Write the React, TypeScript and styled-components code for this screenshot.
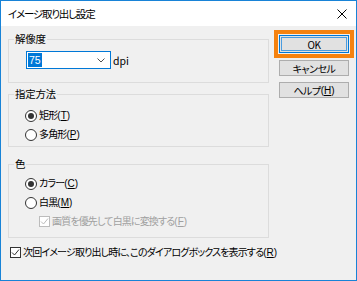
import styled, { createGlobalStyle } from 'styled-components';

const GlobalStyle = createGlobalStyle`
    html, body {
        margin: 0;
        padding: 0;
        background: #ffffff;
    }
    body {
        font-family: "Noto Sans CJK JP", "Noto Sans", sans-serif;
        font-size: 10px;
        letter-spacing: -0.85px;
        color: #000000;
        font-feature-settings: "palt";
    }
`;

const Window = styled.div`
    width: 357px;
    height: 281px;
    box-sizing: border-box;
    border: 1px solid #1883d7;
    background: #f0f0f0;
    display: flex;
    flex-direction: column;
`;

const TitleBar = styled.div`
    height: 25px;
    background: #ffffff;
    display: flex;
    align-items: center;
    justify-content: space-between;
    padding-left: 7px;
`;

const Title = styled.div`
    font-size: 10.5px;
    letter-spacing: -1.2px;
    line-height: 14px;
`;

const CloseButton = styled.div`
    width: 28px;
    height: 25px;
    display: flex;
    align-items: center;
    justify-content: center;
`;

const Body = styled.div`
    flex: 1;
    display: flex;
    align-items: flex-start;
    padding: 6px 0 0 7px;
    gap: 5px;
`;

const LeftColumn = styled.div`
    width: 261px;
    display: flex;
    flex-direction: column;
`;

const RightColumn = styled.div`
    display: flex;
    flex-direction: column;
    margin-top: -2px;
`;

const GroupBox = styled.fieldset<{ $gap?: number }>`
    margin: ${({ $gap }) => $gap ?? 0}px 0 0 0;
    padding: 0;
    border: 1px solid #dcdcdc;
    min-width: 0;
`;

const GroupLabel = styled.legend`
    margin-left: 5px;
    padding: 0 1px;
    line-height: 14px;
    font-size: 10.5px;
    letter-spacing: -0.3px;
`;

const GroupContent = styled.div<{ $pt: number; $pb: number }>`
    display: flex;
    flex-direction: column;
    padding: ${({ $pt, $pb }) => `${$pt}px 0 ${$pb}px 16px`};
`;

const ComboRow = styled.div`
    display: flex;
    align-items: center;
    padding-left: 1px;
`;

const Combo = styled.div`
    width: 85px;
    height: 18px;
    box-sizing: border-box;
    border: 1px solid #0078d7;
    background: #ffffff;
    display: flex;
    align-items: center;
    padding: 0 1px;
`;

const Selected = styled.span`
    background: #0078d7;
    color: #ffffff;
    line-height: 14px;
    padding: 0 1px;
    font-family: "Liberation Sans", Arial, sans-serif;
    font-size: 10.5px;
    letter-spacing: 0;
`;

const Chevron = styled.svg`
    margin-left: auto;
    margin-right: 4px;
`;

const Unit = styled.span`
    margin-left: 2px;
    font-size: 10.5px;
    letter-spacing: 0;
`;

const Option = styled.label<{ $indent?: number; $disabled?: boolean }>`
    display: flex;
    align-items: center;
    height: 19px;
    gap: 2px;
    margin-left: ${({ $indent }) => $indent ?? 0}px;
    color: ${({ $disabled }) => ($disabled ? '#a0a0a0' : '#000000')};
    white-space: nowrap;
`;

const OptionText = styled.span`
    line-height: 14px;
`;

const Radio = styled.span<{ $checked?: boolean }>`
    width: 12px;
    height: 12px;
    box-sizing: border-box;
    border: 1px solid #333333;
    border-radius: 50%;
    background: #ffffff;
    display: flex;
    align-items: center;
    justify-content: center;
    flex-shrink: 0;

    &::after {
        content: '';
        width: 6px;
        height: 6px;
        border-radius: 50%;
        background: ${({ $checked }) => ($checked ? '#333333' : 'transparent')};
    }
`;

const CheckBox = styled.span<{ $disabled?: boolean }>`
    width: 11px;
    height: 11px;
    box-sizing: border-box;
    border: 1px solid ${({ $disabled }) => ($disabled ? '#bcbcbc' : '#333333')};
    background: #ffffff;
    display: flex;
    align-items: center;
    justify-content: center;
    flex-shrink: 0;
`;

const BottomRow = styled.div`
    margin-top: 5px;
    padding-left: 2px;
`;

const Highlight = styled.div`
    border: 4px solid #f5820f;
    padding: 1px;
`;

const Button = styled.div<{ $focused?: boolean; $gap?: number }>`
    width: 70px;
    height: ${({ $focused }) => ($focused ? 18 : 16)}px;
    box-sizing: border-box;
    margin-top: ${({ $gap }) => $gap ?? 0}px;
    margin-left: ${({ $focused }) => ($focused ? 0 : 5)}px;
    border: 1px solid ${({ $focused }) => ($focused ? '#0078d7' : '#adadad')};
    box-shadow: ${({ $focused }) => ($focused ? 'inset 0 0 0 1px #e1e1e1, inset 0 0 0 2px #4a9ce0' : 'none')};
    background: #e1e1e1;
    display: flex;
    align-items: center;
    justify-content: center;
    letter-spacing: -0.5px;
`;

const Mnemonic = styled.span`
    font-family: "Liberation Sans", Arial, sans-serif;
    letter-spacing: 0;

    u {
        text-underline-offset: 1px;
    }
`;

function Key({ k }: { k: string }) {
    return (
        <Mnemonic>
            (<u>{k}</u>)
        </Mnemonic>
    );
}

function Check({ color }: { color: string }) {
    return (
        <svg width="9" height="9" viewBox="0 0 9 9">
            <path d="M1 4.5 L3.5 7 L8 1.5" fill="none" stroke={color} strokeWidth="1" />
        </svg>
    );
}

export default function App() {
    return (
        <>
            <GlobalStyle />
            <Window>
                <TitleBar>
                    <Title>イメージ取り出し設定</Title>
                    <CloseButton>
                        <svg width="10" height="10" viewBox="0 0 10 10">
                            <path d="M0.5 0.5 L9.5 9.5 M9.5 0.5 L0.5 9.5" stroke="#000" strokeWidth="1" />
                        </svg>
                    </CloseButton>
                </TitleBar>
                <Body>
                    <LeftColumn>
                        <GroupBox>
                            <GroupLabel>解像度</GroupLabel>
                            <GroupContent $pt={5} $pb={13}>
                                <ComboRow>
                                    <Combo>
                                        <Selected>75</Selected>
                                        <Chevron width="8" height="5" viewBox="0 0 8 5">
                                            <path d="M0.5 0.5 L4 4 L7.5 0.5" fill="none" stroke="#505050" strokeWidth="1" />
                                        </Chevron>
                                    </Combo>
                                    <Unit>dpi</Unit>
                                </ComboRow>
                            </GroupContent>
                        </GroupBox>

                        <GroupBox $gap={4}>
                            <GroupLabel>指定方法</GroupLabel>
                            <GroupContent $pt={5} $pb={2}>
                                <Option>
                                    <Radio $checked />
                                    <OptionText>
                                        矩形<Key k="T" />
                                    </OptionText>
                                </Option>
                                <Option>
                                    <Radio />
                                    <OptionText>
                                        多角形<Key k="P" />
                                    </OptionText>
                                </Option>
                            </GroupContent>
                        </GroupBox>

                        <GroupBox $gap={10}>
                            <GroupLabel>色</GroupLabel>
                            <GroupContent $pt={3} $pb={6}>
                                <Option>
                                    <Radio $checked />
                                    <OptionText>
                                        カラー<Key k="C" />
                                    </OptionText>
                                </Option>
                                <Option>
                                    <Radio />
                                    <OptionText>
                                        白黒<Key k="M" />
                                    </OptionText>
                                </Option>
                                <Option $indent={14} $disabled>
                                    <CheckBox $disabled>
                                        <Check color="#bcbcbc" />
                                    </CheckBox>
                                    <OptionText>
                                        画質を優先して白黒に変換する<Key k="F" />
                                    </OptionText>
                                </Option>
                            </GroupContent>
                        </GroupBox>

                        <BottomRow>
                            <Option>
                                <CheckBox>
                                    <Check color="#333333" />
                                </CheckBox>
                                <OptionText>
                                    次回イメージ取り出し時に、このダイアログボックスを表示する<Key k="R" />
                                </OptionText>
                            </Option>
                        </BottomRow>
                    </LeftColumn>

                    <RightColumn>
                        <Highlight>
                            <Button $focused>OK</Button>
                        </Highlight>
                        <Button $gap={2}>キャンセル</Button>
                        <Button $gap={6}>
                            ヘルプ<Key k="H" />
                        </Button>
                    </RightColumn>
                </Body>
            </Window>
        </>
    );
}
